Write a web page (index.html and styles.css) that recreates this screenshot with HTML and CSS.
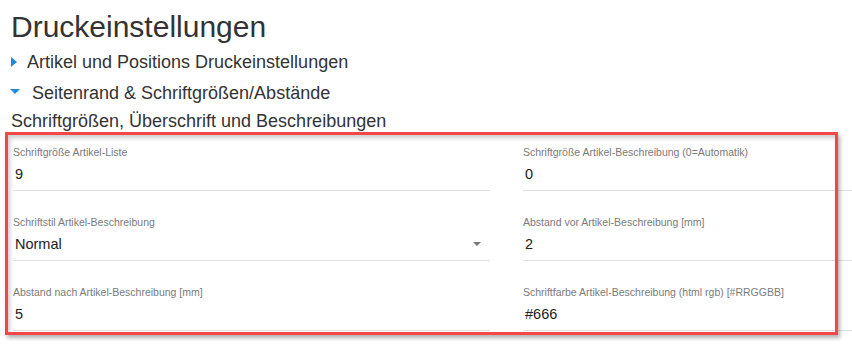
FILE: index.html
```html
<!DOCTYPE html>
<html lang="de">
<head>
  <meta charset="UTF-8">
  <meta name="viewport" content="width=device-width, initial-scale=1.0">
  <title>Druckeinstellungen</title>
  <link rel="stylesheet" href="styles.css">
</head>
<body>
  <div class="page">
    <h1 class="title">Druckeinstellungen</h1>
    <div class="toggle closed"><span class="caret"></span>Artikel und Positions Druckeinstellungen</div>
    <div class="toggle open"><span class="caret"></span>Seitenrand &amp; Schriftgrößen/Abstände</div>
    <h4 class="subtitle">Schriftgrößen, Überschrift und Beschreibungen</h4>

    <div class="form">
      <div class="fields">
        <div class="field">
          <label>Schriftgröße Artikel-Liste</label>
          <div class="value">9</div>
        </div>
        <div class="field">
          <label>Schriftgröße Artikel-Beschreibung (0=Automatik)</label>
          <div class="value">0</div>
        </div>
        <div class="field">
          <label>Schriftstil Artikel-Beschreibung</label>
          <div class="value select">Normal<span class="arrow"></span></div>
        </div>
        <div class="field">
          <label>Abstand vor Artikel-Beschreibung [mm]</label>
          <div class="value">2</div>
        </div>
        <div class="field">
          <label>Abstand nach Artikel-Beschreibung [mm]</label>
          <div class="value">5</div>
        </div>
        <div class="field">
          <label>Schriftfarbe Artikel-Beschreibung (html rgb) [#RRGGBB]</label>
          <div class="value">#666</div>
        </div>
      </div>
      <div class="highlight"></div>
    </div>
  </div>
</body>
</html>
```

FILE: styles.css
```css
html, body {
  margin: 0;
  padding: 0;
  background: #fff;
  overflow: hidden;
}
body {
  font-family: "Liberation Sans", Arial, sans-serif;
  color: #333;
}
.page {
  padding-top: 9px;
}
.title {
  margin: 0;
  padding-left: 11px;
  font-size: 30px;
  font-weight: normal;
  line-height: 36px;
  color: #333;
}
.toggle {
  display: flex;
  align-items: center;
  font-size: 18px;
  line-height: 30px;
  color: #333;
}
.toggle.closed {
  margin-top: 2px;
  padding-left: 11px;
}
.toggle.open {
  margin-top: 1px;
  padding-left: 10px;
}
.caret {
  width: 0;
  height: 0;
}
.closed .caret {
  border-top: 5px solid transparent;
  border-bottom: 5px solid transparent;
  border-left: 6px solid #1e88e5;
  margin-right: 10px;
  margin-top: -1px;
}
.open .caret {
  border-left: 5px solid transparent;
  border-right: 5px solid transparent;
  border-top: 5px solid #1e88e5;
  margin-right: 12px;
  margin-top: -4px;
}
.subtitle {
  margin: 0;
  padding-left: 11px;
  font-size: 18px;
  font-weight: normal;
  line-height: 26px;
  color: #333;
}
.form {
  position: relative;
  padding-top: 11px;
  padding-bottom: 16px;
}
.fields {
  display: grid;
  grid-template-columns: 477px 1fr;
  column-gap: 33px;
  row-gap: 24px;
  padding-left: 13px;
}
.field label {
  display: block;
  font-size: 10.5px;
  line-height: 14px;
  color: #7a7a7a;
}
.value {
  margin-top: 5px;
  padding-bottom: 6px;
  padding-left: 2px;
  font-size: 14.5px;
  line-height: 20px;
  color: #222;
  border-bottom: 1px solid #e0e0e0;
}
.select {
  display: flex;
  align-items: center;
  justify-content: space-between;
}
.arrow {
  width: 0;
  height: 0;
  margin-right: 9px;
  border-left: 4px solid transparent;
  border-right: 4px solid transparent;
  border-top: 4px solid #777;
}
.highlight {
  position: absolute;
  top: -2px;
  left: 5px;
  width: 833px;
  height: 203px;
  box-sizing: border-box;
  border: 3px solid #f34747;
  box-shadow: 2px 3px 4px rgba(0, 0, 0, 0.3), inset 2px 3px 4px rgba(0, 0, 0, 0.2);
  pointer-events: none;
}
```
